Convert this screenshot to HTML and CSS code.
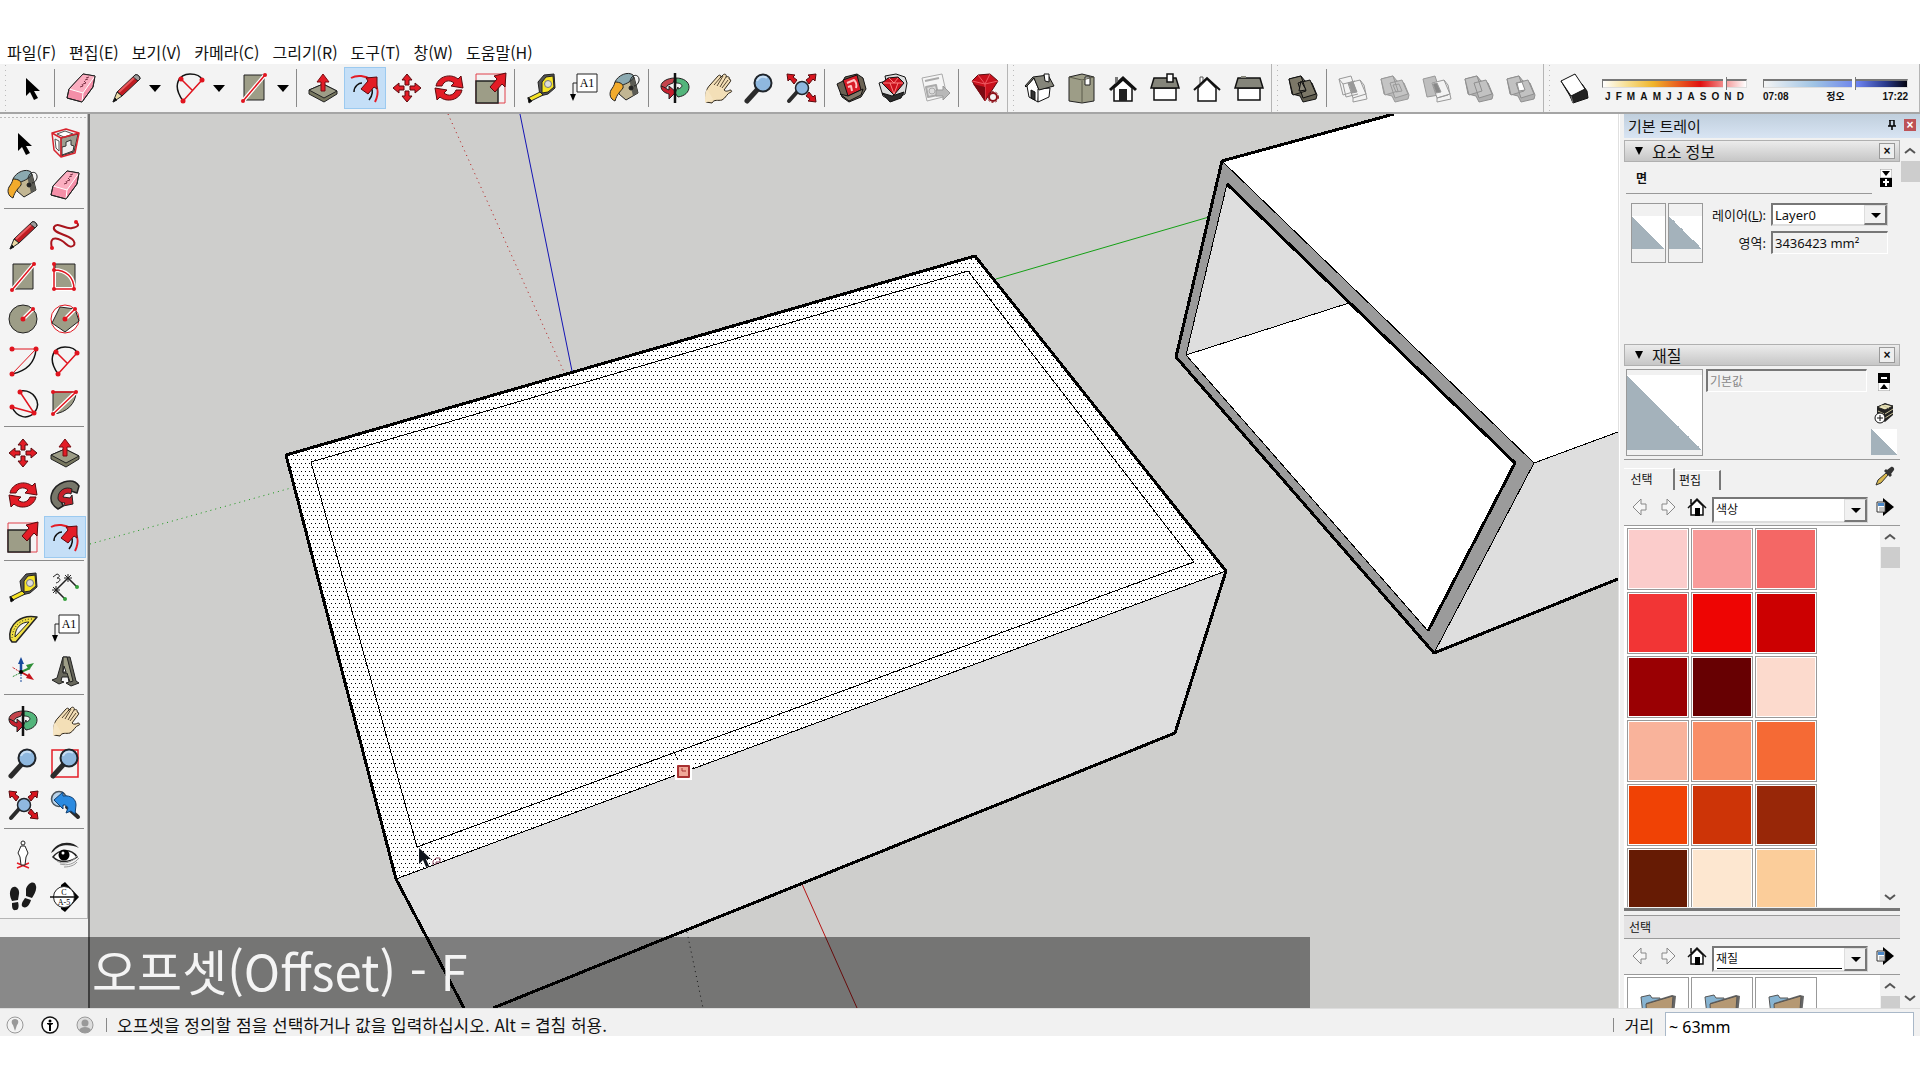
FILE: index.html
```html
<!DOCTYPE html>
<html lang="ko">
<head>
  <meta charset="UTF-8" />
  <meta name="viewport" content="width=device-width, initial-scale=1" />
  <title>SketchUp</title>
  <link rel="stylesheet" href="styles.css">
</head>
<body>

  <!-- icon set, every icon sits on a 32 x 32 box -->
  <svg class="sprite" aria-hidden="true">
    <symbol id="i-select" viewBox="0 0 32 32"><path d="M11 6v18l4-4 4 8 4-2-4-7h6z" fill="#000"/></symbol>
    <symbol id="i-eraser" viewBox="0 0 32 32" stroke="#222" stroke-linejoin="round">
      <path d="M18 2l12 2-2 11-11 15-15-4 2-9z" fill="#f48fa8"/>
      <path d="M18 2l12 2-12 17-14-4z" fill="#fbaec0" stroke="none"/>
      <path d="M4 17l14 4 12-17M18 21l-1 9" fill="none" stroke="#fff"/>
      <path d="M18 2l12 2-2 11-11 15-15-4 2-9z" fill="none"/>
      <path d="M15 15l3-1-1-2m1 0l3-1-2-2m1-1l3-1m-2-1l3-1" fill="none" stroke="#7d3346"/>
    </symbol>
    <symbol id="i-pencil" viewBox="0 0 32 32" stroke="#222" stroke-linejoin="round">
      <path d="M25 3c2-1 5 1 5 4L12 24l-5-4z" fill="#c01c22"/>
      <path d="M23 5l5 4 2-2c0-3-3-5-5-4z" fill="#9c9c9c"/>
      <path d="M7 20l5 4-9 6z" fill="#ead9a4"/>
      <path d="M5 26l2 2-4 2z" fill="#000"/>
      <path d="M9 20L24 6" stroke="#e8595d" stroke-width="2"/>
    </symbol>
    <symbol id="i-freehand" viewBox="0 0 32 32">
      <path d="M3 29C-1 14 12 20 17 25c6 6 12 0 6-5C17 15 3 14 5 8c3-6 12 3 18 1 6-1 8-3 4-6" fill="none" stroke="#a8141c" stroke-width="2"/>
      <g fill="#e0141e"><circle cx="3" cy="29" r="2"/><circle cx="27" cy="3" r="2"/></g>
    </symbol>
    <symbol id="i-rect" viewBox="0 0 32 32">
      <path d="M6 3h20v25H6z" fill="#9d9d87" stroke="#222"/>
      <path d="M5 29L27 3" stroke="#fff" stroke-width="4"/><path d="M5 29L27 3" stroke="#e0141e" stroke-width="1.5"/>
      <g fill="#e0141e"><circle cx="5" cy="29" r="2"/><circle cx="27" cy="3" r="2"/></g>
    </symbol>
    <symbol id="i-rotrect" viewBox="0 0 32 32">
      <path d="M6 3h20v25H6z" fill="#9d9d87" stroke="#222"/>
      <path d="M5 9c12 0 20 7 20 19H5z" fill="none" stroke="#fff" stroke-width="4"/>
      <path d="M5 3v25h20C25 16 17 9 5 9" fill="none" stroke="#e0141e" stroke-width="1.5"/>
      <g fill="#e0141e"><circle cx="5" cy="3" r="2"/><circle cx="5" cy="9" r="2"/><circle cx="5" cy="28" r="2"/><circle cx="25" cy="28" r="2"/></g>
    </symbol>
    <symbol id="i-circle" viewBox="0 0 32 32">
      <circle cx="16" cy="16" r="14" fill="#9d9d87" stroke="#222"/>
      <path d="M16 16L26 6" stroke="#fff" stroke-width="4"/><path d="M16 16L26 6" stroke="#e0141e" stroke-width="1.5"/>
      <g fill="#e0141e"><circle cx="16" cy="16" r="2.5"/><circle cx="26" cy="6" r="2"/></g>
    </symbol>
    <symbol id="i-polygon" viewBox="0 0 32 32">
      <circle cx="16" cy="16" r="14" fill="#fff" stroke="#e0141e"/>
      <path d="M11 4l15 2 4 12-14 11L3 20z" fill="#9d9d87" stroke="#222"/>
      <path d="M16 16L26 6" stroke="#fff" stroke-width="4"/><path d="M16 16L26 6" stroke="#e0141e" stroke-width="1.5"/>
      <g fill="#e0141e"><circle cx="16" cy="16" r="2.5"/><circle cx="26" cy="6" r="2"/></g>
    </symbol>
    <symbol id="i-arc" viewBox="0 0 32 32">
      <path d="M29 4C28 18 19 26 5 29" fill="none" stroke="#111" stroke-width="1.5"/>
      <path d="M5 4h24L5 29" fill="none" stroke="#e0141e"/>
      <g fill="#e0141e"><circle cx="5" cy="4" r="2.5"/><circle cx="29" cy="4" r="2.5"/><circle cx="5" cy="29" r="2.5"/></g>
    </symbol>
    <symbol id="i-arc2" viewBox="0 0 32 32">
      <path d="M9 29C-3 12 6 2 16 2c7 0 11 3 12 6" fill="none" stroke="#111" stroke-width="1.5"/>
      <path d="M9 29L28 8M7 7l12 12" fill="none" stroke="#e0141e" stroke-width="1.5"/>
      <g fill="#e0141e"><circle cx="9" cy="29" r="2.5"/><circle cx="28" cy="8" r="2.5"/><circle cx="7" cy="7" r="2.5"/></g>
    </symbol>
    <symbol id="i-arc3" viewBox="0 0 32 32">
      <path d="M13 4c13-2 22 11 15 21-7 8-18 6-23-5" fill="none" stroke="#111" stroke-width="1.5"/>
      <path d="M13 5l14 21L5 20" fill="none" stroke="#e0141e" stroke-width="1.5"/>
      <g fill="#e0141e"><circle cx="13" cy="5" r="2.5"/><circle cx="27" cy="26" r="2.5"/><circle cx="5" cy="20" r="2.5"/></g>
    </symbol>
    <symbol id="i-pie" viewBox="0 0 32 32">
      <path d="M4 5h23c0 11-9 21-23 22z" fill="#9d9d87" stroke="#222"/>
      <path d="M4 27L27 5" stroke="#fff" stroke-width="4"/><path d="M4 5h23L4 27" fill="none" stroke="#e0141e" stroke-width="1.5"/>
      <g fill="#e0141e"><circle cx="4" cy="5" r="2"/><circle cx="27" cy="5" r="2"/><circle cx="4" cy="27" r="2"/></g>
    </symbol>
    <symbol id="i-push" viewBox="0 0 32 32" stroke="#222" stroke-linejoin="round">
      <path d="M2 18l14-6 14 7v3l-13 8L2 22z" fill="#77775f"/><path d="M2 18l14-6 14 7-13 7z" fill="#9d9d87"/>
      <path d="M14 19v-9h-4l6-8 6 8h-4v9z" fill="#e31c26" stroke="#7a0c12"/>
    </symbol>
    <symbol id="i-offset" viewBox="0 0 32 32">
      <path d="M2 6C14-1 36 10 26 30" fill="none" stroke="#e31c26" stroke-width="2"/>
      <path d="M5 20c0-6 5-9 8-9m7 17c4-5 4-10 2-12" fill="none" stroke="#111" stroke-width="1.5"/>
      <path d="M28 5L17 6l2 3-7 8 7 5 6-7 3 2z" fill="#e31c26" stroke="#5a0a0e"/>
    </symbol>
    <symbol id="i-move" viewBox="0 0 32 32">
      <g fill="#e31c26" stroke="#5a0a0e" stroke-linejoin="round"><path d="M16 2l5 6h-3v5h-4V8h-3z"/><path d="M16 30l5-6h-3v-5h-4v5h-3z"/><path d="M2 16l6-5v3h5v4H8v3z"/><path d="M30 16l-6-5v3h-5v4h5v3z"/></g>
    </symbol>
    <symbol id="i-rotate" viewBox="0 0 32 32" fill="#e31c26" stroke="#5a0a0e" stroke-linejoin="round">
      <path d="M3 14C5 4 18 1 25 7l3-3 2 12-12-2 3-3c-5-4-10-2-12 3z"/><path d="M29 18C27 28 14 31 7 25l-3 3-2-12 12 2-3 3c5 4 10 2 12-3z"/>
    </symbol>
    <symbol id="i-scale" viewBox="0 0 32 32">
      <path d="M1 2h29v29H1z" fill="none" stroke="#e0404a"/><path d="M1 9h22v22H1z" fill="#9d9d87" stroke="#222" stroke-width="1.5"/>
      <path d="M31 1L19 4l3 3-7 8 5 5 7-8 3 3z" fill="#e31c26" stroke="#5a0a0e"/>
    </symbol>
    <symbol id="i-follow" viewBox="0 0 32 32" stroke="#222" stroke-linejoin="round">
      <path d="M9 30C-4 22 3 7 15 3c6-2 12-1 15 4l-2 7-6-2c-8-1-12 6-8 15z" fill="#77776a" stroke-width="1.5"/>
      <path d="M9 19c0-8 8-12 14-9l-1 5c-4-2-7 0-8 3l7 1 2-3 1 9-10 2 2-3c-4 0-7-2-7-5z" fill="#c5202a"/>
    </symbol>
    <symbol id="i-tape" viewBox="0 0 32 32" stroke="#222" stroke-linejoin="round">
      <path d="M13 10l6-7 10-1 1 14-7 6-8 2z" fill="#555"/><path d="M17 10l4-5 7-1 1 11-6 5-6 1z" fill="#f6e325"/><circle cx="23" cy="12" r="3.5" fill="#ddd" stroke="#777"/>
      <path d="M15 20l-12 6 1 4 14-7z" fill="#f6e325"/><path d="M3 25l4 4-3 2z" fill="#000"/>
    </symbol>
    <symbol id="i-dim" viewBox="0 0 32 32">
      <path d="M7 19L19 7l9 9M7 19l9 9" fill="none" stroke="#222" stroke-width="1.5"/>
      <path d="M3 19h8M7 15v8M4 16l6 6m0-6l-6 6M15 7h8m-4-4v8m-3-7l6 6m0-6l-6 6M4 6l4-3c4 1 2 4 0 4 5 0 3 4-1 5" fill="none" stroke="#222"/>
      <g fill="#35a03c"><circle cx="28" cy="16" r="2"/><circle cx="16" cy="28" r="2"/></g>
    </symbol>
    <symbol id="i-protractor" viewBox="0 0 32 32" fill="none" stroke-linejoin="round">
      <path d="M30 4C14 1 1 11 3 26l2 3h4z" fill="#f0df44" stroke="#222" stroke-width="1.5"/>
      <path d="M22 9C14 9 8 15 8 24z" fill="#f3f3f3" stroke="#222"/><path d="M25 6C13 6 6 13 5 25" stroke="#222" stroke-dasharray="1 2"/>
    </symbol>
    <symbol id="i-text" viewBox="0 0 32 32">
      <path d="M10 2h20v18H10z" fill="#fff" stroke="#222"/><path d="M10 11H6v16" fill="none" stroke="#222"/><path d="M3 22h6l-3 7z"/>
      <text x="20" y="15" class="icon-serif">A1</text>
    </symbol>
    <symbol id="i-axes" viewBox="0 0 32 32">
      <path d="M14 17v-9" stroke="#174a9c" stroke-width="2.5"/><path d="M11 9h6l-3-7z" fill="#174a9c"/><path d="M14 17l9-4" stroke="#2f8f38" stroke-width="2"/><path d="M19 10l8-2-5 7z" fill="#2f8f38"/><path d="M14 17l9 5" stroke="#c6141c" stroke-width="2"/><path d="M22 18l5 7-8-2z" fill="#c6141c"/>
      <path d="M14 19v8" stroke="#174a9c" stroke-dasharray="2 1"/><path d="M13 17l-8-5" stroke="#c6141c" stroke-dasharray="2 1"/><path d="M13 18l-8 4" stroke="#2f8f38" stroke-dasharray="2 1"/><circle cx="14" cy="17" r="2"/>
    </symbol>
    <symbol id="i-3dtext" viewBox="0 0 32 32" stroke="#222" stroke-linejoin="round">
      <path d="M3 25l5-2 6-21h7l6 24 3 2-8 3-5-3 3-1-1-5h-6l-1 4 3 1-5 2z" fill="#66665a"/><path d="M14 2h4l6 24-3 1-3-9h-4z" fill="#9d9d87"/><path d="M15 11l2 6h-3z" fill="#fff"/>
    </symbol>
    <symbol id="i-orbit" viewBox="0 0 32 32" stroke="#222" stroke-linejoin="round">
      <path d="M16 6C8 6 2 10 2 14l3 4 4-5 5-2z" fill="#c4444c"/><path d="M17 6c8 0 13 4 13 9s-4 9-11 10l-3-4 3-6v2c5-1 6-6-2-6z" fill="#53b57b"/>
      <path d="M2 14c0 5 4 7 8 8v5l7-7-7-6v4c-3-1-4-3-8-4z" fill="#c51f2d"/><path d="M16 1v30" stroke="#111" stroke-width="2.5"/>
    </symbol>
    <symbol id="i-pan" viewBox="0 0 32 32">
      <path d="M5 30c0-7-1-12 4-17l8-9c2-2 4 0 2 2l3-3c2-2 4 0 3 2 2-1 4 0 3 2 2 0 2 2 1 3l-6 8c2 2 4 1 6 0 2 0 2 2 1 2-4 1-5 6-9 8-4 1-8-1-10 3z" fill="#f3dfb7" stroke="#2c2418"/>
      <path d="M19 6l-6 7m9-9l-6 10m9-9l-6 10m8-7l-6 8" stroke="#554530" fill="none"/><path d="M4 31c0-8 0-10 2-14l6 10z" fill="#f6e5c3"/>
    </symbol>
    <symbol id="i-zoom" viewBox="0 0 32 32">
      <path d="M4 29l10-11" stroke="#2b2b2b" stroke-width="5" stroke-linecap="round"/><circle cx="20" cy="11" r="8.5" fill="#8fb8df" stroke="#20252b" stroke-width="2"/><path d="M14 9c2-5 7-5 10-3" stroke="#c7def4" fill="none" stroke-width="2"/>
    </symbol>
    <symbol id="i-zoomwin" viewBox="0 0 32 32"><path d="M3 3h26v27H3z" fill="none" stroke="#e31c26" stroke-width="1.5"/><use href="#i-zoom" width="32" height="32"/></symbol>
    <symbol id="i-extents" viewBox="0 0 32 32">
      <path d="M4 29l8-9" stroke="#2b2b2b" stroke-width="4" stroke-linecap="round"/><circle cx="17" cy="16" r="6.5" fill="#8fb8df" stroke="#20252b" stroke-width="1.5"/>
      <g fill="#d8151f" stroke="#5a0a0e"><path d="M2 2l8 1-2 2 4 3-3 4-4-5-2 2z"/><path d="M31 2l-8 1 2 2-4 3 3 4 4-5 2 2z"/><path d="M31 30l-8-1 2-2-4-3 3-4 4 5 2-2z"/></g>
    </symbol>
    <symbol id="i-prev" viewBox="0 0 32 32">
      <path d="M18 18l11 10" stroke="#2b2b2b" stroke-width="4" stroke-linecap="round"/><circle cx="10" cy="10" r="7.5" fill="#b9d3ea" stroke="#4a545c" stroke-width="1.5"/>
      <path d="M5 11l9-8v4c8-1 13 3 13 9l-1 9-4-3-5 2 2-5c-2-4-5-3-5-3v4z" fill="#2a8ae0" stroke="#113f70"/>
    </symbol>
    <symbol id="i-component" viewBox="0 0 32 32" stroke-linejoin="round">
      <path d="M3 6l14-4 13 4-4 20-14 4-7-7z" fill="#eee"/><path d="M12 11l17-4-4 18-13 4z" fill="#9d9d90" stroke="#333"/>
      <path d="M8 7l8-3 8 3-9 3zM6 12l4 2v10l-3-3z" fill="#fff" stroke="#555"/><path d="M13 20l4-1v-4l5-2v5l3 1-1 5-11 4z" fill="#eee" stroke="#333"/>
      <path d="M3 6l14-4 13 4-4 20-14 4-7-7zM3 6l9 5 18-5M12 11v19" fill="none" stroke="#d8232d" stroke-width="1.5"/>
    </symbol>
    <symbol id="i-paint" viewBox="0 0 32 32" stroke="#222" stroke-linejoin="round">
      <path d="M9 11L25 5l4 16-12 7-7-6z" fill="#c2b693"/><path d="M20 7l5-2 4 16-5 3z" fill="#5b5b54" stroke="none"/><path d="M6 10C9 3 19-1 24 3c3 4-7 10-15 11z" fill="#8ba9b0"/>
      <path d="M21 9c2-8 10-7 9 0-1 3-3 5-5 5" fill="none"/><path d="M6 10c5 0 9 2 8 6-3 4-6 6-8 13-5-2-6-7-4-11 2-3 3-4 4-8z" fill="#f2ab2c"/><circle cx="22" cy="16" r="2" fill="#222"/>
    </symbol>
    <symbol id="i-walkman" viewBox="0 0 32 32">
      <path d="M10 24l12 5M22 24l-12 5" stroke="#e31c26" stroke-width="1.5"/><circle cx="16" cy="4" r="2" fill="#fff" stroke="#222"/><path d="M14 7h4l3 7-2 4-1 8h-4l-1-8-2-4z" fill="#fff" stroke="#222"/>
    </symbol>
    <symbol id="i-eye" viewBox="0 0 32 32">
      <path d="M2 14C7 2 23 1 30 9 22 5 10 5 5 12z" fill="#222"/><path d="M4 18c6-8 18-9 24 0-8 6-18 6-24 0z" fill="#fff" stroke="#222" stroke-width="1.5"/><circle cx="15" cy="16" r="5.5"/><circle cx="14" cy="14" r="1.5" fill="#fff"/>
      <path d="M8 22c6 4 14 2 20-5m-17 8c8 2 14 0 19-6m-15 9c6 0 11-2 13-5" fill="none" stroke="#999"/>
    </symbol>
    <symbol id="i-feet" viewBox="0 0 32 32" fill="#1b1b1b">
      <path d="M4 8c3-5 9-1 8 5l-1 6-6 1c-2-4-3-8-1-12zM5 22l6-1c1 3 1 8-2 8-4 1-4-3-4-7zM19 8c2-7 9-9 10-3 1 4-2 9-4 12l-6-2zM18 17l6 2c-1 4-4 9-8 7-3-2 0-6 2-9z"/>
    </symbol>
    <symbol id="i-section" viewBox="0 0 32 32">
      <path d="M12 4l4-3 14 15-14 15-4-3z"/><circle cx="15" cy="16" r="10.5" fill="#fff" stroke="#222"/><path d="M1 16h28" stroke="#111" stroke-width="1.5"/>
      <text x="15" y="14" class="icon-tiny">C</text><text x="15" y="24" class="icon-tiny">A-5</text>
    </symbol>
    <symbol id="i-wh1" viewBox="0 0 32 32" stroke="#111" stroke-linejoin="round">
      <path d="M2 12l6-3 2-4 12-3 6 4 3 11-5 8-12 5-7-5z" fill="#6b6254"/><path d="M8 8l14-5 4 15-13 6z" fill="#d81c28"/><path d="M12 11l7-3c3 3 3 5 2 8m-8-1l3-1 1 5" fill="none" stroke="#ffc5c5" stroke-width="2"/><path d="M5 22l8 2 15-7-2 6-12 6z" fill="#807868"/>
    </symbol>
    <symbol id="i-wh2" viewBox="0 0 32 32" stroke="#111" stroke-linejoin="round">
      <path d="M2 11l7-2-1-5 11-2 9 3 2 6-2 11-13 7-9-5z" fill="#ddd"/><path d="M5 11l6-5 10-1 6 6-10 12z" fill="#c9101c"/><path d="M6 11h20M12 6l5 5 4-5M13 11l4 11 4-11" fill="none" stroke="#ff8080"/><path d="M5 21l10 3 12-4-3 6-11 4z" fill="#2c2c2c"/>
    </symbol>
    <symbol id="i-layout" viewBox="0 0 32 32" stroke="#aaa" stroke-linejoin="round">
      <path d="M3 6l20-4 5 22-20 5z" fill="#f5f5f5"/><path d="M6 9l14-3M7 15l10-2 2 10-10 2z" fill="#ddd" stroke-width="2"/><circle cx="13" cy="19" r="3" fill="none"/><path d="M17 18h7v-4l7 7-7 7v-4h-7z" fill="#b8b8b8" stroke="#999"/>
    </symbol>
    <symbol id="i-ruby" viewBox="0 0 32 32" stroke="#5a0a0e" stroke-linejoin="round">
      <path d="M3 9l6-6 12-1 8 7-13 20z" fill="#c9101c"/><path d="M3 9l13 3 13-3M9 3l7 9 5-10M16 12v17" fill="none" stroke="#f05a62"/><path d="M4 12l12 3v14z" fill="#7c0a12" stroke="none"/>
      <circle cx="24" cy="25" r="4" fill="#f3f3f3" stroke="#8c1018" stroke-width="2"/><circle cx="24" cy="25" r="5.5" fill="none" stroke="#8c1018" stroke-dasharray="2 2"/>
    </symbol>
    <symbol id="i-iso" viewBox="0 0 32 32" stroke="#111" stroke-linejoin="round">
      <path d="M4 14l7-8 5 12-1 12-9-5z" fill="#fff"/><path d="M15 17l12-1-1 9-11 5z" fill="#fff"/><path d="M10 5l15-2 6 11-15 4-5-12-8 9-1-1z" fill="#85857a"/><path d="M21 2h5v8l-4-1z" fill="#fff"/><path d="M8 18l4 2v8l-4-2z" fill="#333"/>
    </symbol>
    <symbol id="i-top" viewBox="0 0 32 32" stroke="#222" stroke-linejoin="round">
      <path d="M4 5l13-3 12 3v24l-12 2-13-2z" fill="#9d9d87"/><path d="M17 9v22" stroke="#5a5a4a"/><path d="M20 5h5v8h-5z" fill="#fff"/><path d="M4 5l13 3 12-3" fill="none" stroke="#5a5a4a"/>
    </symbol>
    <symbol id="i-front" viewBox="0 0 32 32"><path d="M7 16l9-8 9 8v13H7z" fill="#fff" stroke="#111" stroke-width="1.5"/><path d="M3 18L16 6l13 12" fill="none" stroke="#111" stroke-width="3"/><path d="M12 17h8v12h-8z" fill="#222"/><path d="M8 5h3v4l-3 3z" fill="#777"/></symbol>
    <symbol id="i-right" viewBox="0 0 32 32"><path d="M5 16h22v12H5z" fill="#fff" stroke="#111" stroke-width="1.5"/><path d="M5 6h22l3 10H2z" fill="#85857a" stroke="#111" stroke-width="1.5"/><path d="M18 2h6v8h-6z" fill="#fff" stroke="#111" stroke-width="1.5"/></symbol>
    <symbol id="i-back" viewBox="0 0 32 32"><path d="M7 16l9-9 9 9v13H7z" fill="#fff" stroke="#111" stroke-width="1.5"/><path d="M9 5h3v6l-3 3z" fill="#fff" stroke="#555"/><path d="M3 18L16 6l13 12" fill="none" stroke="#111" stroke-width="2"/></symbol>
    <symbol id="i-left" viewBox="0 0 32 32"><path d="M5 16h22v12H5z" fill="#fff" stroke="#111" stroke-width="1.5"/><path d="M5 6h22l3 10H2z" fill="#85857a" stroke="#111" stroke-width="1.5"/><path d="M8 4h5v2H8z" fill="#85857a"/></symbol>
    <symbol id="i-shell" viewBox="0 0 32 32" stroke="#111" stroke-linejoin="round"><path d="M2 7l12-3 4 5 7 2 5 12-1 4-13 3-3-6-8-2z" fill="#625f51"/><path d="M2 7l12-3 5 15-13 4zM11 11l12-3 6 14-13 4z" fill="#7c7868"/><path d="M14 9l5 9-7 1z" fill="#8d897a"/></symbol>
    <symbol id="i-intersect" viewBox="0 0 32 32" stroke="#999" stroke-linejoin="round" fill="none"><path d="M2 7l12-3 5 15-13 4zM11 11l12-3 6 14-13 4z"/><path d="M2 7l4 5 12-3M6 12l3 13 12-3M23 8l4 5 3 14-14 3v-4"/><path d="M12 11l4-1 4 10-5 1z" fill="#999"/></symbol>
    <symbol id="i-union" viewBox="0 0 32 32" stroke="#999" stroke-linejoin="round"><path d="M2 7l12-3 4 5 7 2 5 12-1 4-13 3-3-6-8-2z" fill="#b8b8b8"/><path d="M2 7l12-3 5 15-13 4zM11 11l12-3 6 14-13 4zM14 13l6-1 3 7-6 1z" fill="#c4c4c4"/></symbol>
    <symbol id="i-subtract" viewBox="0 0 32 32" stroke="#999" stroke-linejoin="round"><path d="M2 7l12-3 5 15-1 4-12 2z" fill="#bebebe"/><path d="M11 11l12-3 6 14-13 4z" fill="#f3f3f3"/><path d="M12 12l4-1 4 9-5 1z" fill="#888"/><path d="M23 8l4 5 3 14-14 3v-4m0 0l11-3" fill="none"/></symbol>
    <symbol id="i-trim" viewBox="0 0 32 32" stroke="#8f8f8f" stroke-linejoin="round"><path d="M2 7l12-3 4 5 7 2 5 12-1 4-13 3-3-6-8-2z" fill="#b0b0b0"/><path d="M2 7l12-3 5 15-13 4zM11 11l12-3 6 14-13 4z" fill="#c2c2c2"/></symbol>
    <symbol id="i-split" viewBox="0 0 32 32" stroke="#8f8f8f" stroke-linejoin="round"><path d="M2 7l12-3 4 5 7 2 5 12-1 4-13 3-3-6-8-2z" fill="#b0b0b0"/><path d="M2 7l12-3 5 15-13 4zM11 11l12-3 6 14-13 4z" fill="#c2c2c2"/><path d="M12 11l5-1 3 8-6 1z" fill="#fff"/></symbol>
    <symbol id="i-shadow" viewBox="0 0 32 32" stroke="#111" stroke-linejoin="round"><path d="M2 9l9 15 3 7 15-5-1-7-5-7z" fill="#222"/><path d="M2 9l14-7 10 15-14 7z" fill="#fff"/><path d="M12 24l2 7" stroke="#777"/></symbol>
    <symbol id="i-prevnav" viewBox="0 0 16 18"><path d="M1 9l8-8v5h5v6H9v5z" fill="#f6f6f6" stroke="#888"/></symbol>
    <symbol id="i-nextnav" viewBox="0 0 16 18"><path d="M15 9L7 1v5H2v6h5v5z" fill="#f6f6f6" stroke="#888"/></symbol>
    <symbol id="i-home" viewBox="0 0 20 20"><path d="M4 9l6-6 6 6v9H4z" fill="#fff" stroke="#111" stroke-width="1.5"/><path d="M1 11l9-9 9 9M4 7V2" fill="none" stroke="#111" stroke-width="1.5"/><path d="M8 11h5v8H8z"/></symbol>
    <symbol id="i-details" viewBox="0 0 18 18"><path d="M7 3V0l11 9-11 9v-3z"/><path d="M1 4h8v10H1z" fill="#fff" stroke="#333"/><path d="M2 5h6v3H2z" fill="#4b87c7"/><path d="M3 10h5m-5 2h5" stroke="#888"/></symbol>
    <symbol id="i-chev" viewBox="0 0 12 8"><path d="M1 6l5-4 5 4" fill="none" stroke="#555" stroke-width="2"/></symbol>
    <symbol id="i-folder" viewBox="0 0 36 32"><path d="M1 5l9-2 2 3h8v26H4z" fill="#87b4d2" stroke="#555"/><path d="M6 11l26-8 4 1-3 28H6z" fill="#666"/><path d="M6 12l27-8-2 28H7z" fill="#b59873" stroke="#555"/></symbol>
  </svg>

  <nav class="menubar">
    <button>파일(F)</button>
    <button>편집(E)</button>
    <button>보기(V)</button>
    <button>카메라(C)</button>
    <button>그리기(R)</button>
    <button>도구(T)</button>
    <button>창(W)</button>
    <button>도움말(H)</button>
  </nav>

  <header class="toolbars">
    <div class="toolbar">
      <button class="tool" aria-label="선택"><svg><use href="#i-select"/></svg></button>
      <span class="sep"></span>
      <button class="tool" aria-label="지우개"><svg><use href="#i-eraser"/></svg></button>
      <div class="split"><button class="tool" aria-label="선"><svg><use href="#i-pencil"/></svg></button><button class="caret" aria-label="선 도구"></button></div>
      <div class="split"><button class="tool" aria-label="호"><svg><use href="#i-arc2"/></svg></button><button class="caret" aria-label="호 도구"></button></div>
      <div class="split"><button class="tool" aria-label="직사각형"><svg><use href="#i-rect"/></svg></button><button class="caret" aria-label="도형 도구"></button></div>
      <span class="sep"></span>
      <button class="tool" aria-label="밀기/끌기"><svg><use href="#i-push"/></svg></button>
      <button class="tool active" aria-label="오프셋"><svg><use href="#i-offset"/></svg></button>
      <button class="tool" aria-label="이동"><svg><use href="#i-move"/></svg></button>
      <button class="tool" aria-label="회전"><svg><use href="#i-rotate"/></svg></button>
      <button class="tool" aria-label="배율"><svg><use href="#i-scale"/></svg></button>
      <span class="sep"></span>
      <button class="tool" aria-label="줄자"><svg><use href="#i-tape"/></svg></button>
      <button class="tool" aria-label="텍스트"><svg><use href="#i-text"/></svg></button>
      <button class="tool" aria-label="페인트통"><svg><use href="#i-paint"/></svg></button>
      <span class="sep"></span>
      <button class="tool" aria-label="궤도"><svg><use href="#i-orbit"/></svg></button>
      <button class="tool" aria-label="팬"><svg><use href="#i-pan"/></svg></button>
      <button class="tool" aria-label="확대/축소"><svg><use href="#i-zoom"/></svg></button>
      <button class="tool" aria-label="범위 확대"><svg><use href="#i-extents"/></svg></button>
      <span class="sep"></span>
      <button class="tool" aria-label="3D Warehouse"><svg><use href="#i-wh1"/></svg></button>
      <button class="tool" aria-label="Extension Warehouse"><svg><use href="#i-wh2"/></svg></button>
      <button class="tool" aria-label="LayOut"><svg><use href="#i-layout"/></svg></button>
      <span class="sep"></span>
      <button class="tool" aria-label="확장 프로그램 관리자"><svg><use href="#i-ruby"/></svg></button>
    </div>
    <div class="toolbar">
      <button class="tool" aria-label="등각"><svg><use href="#i-iso"/></svg></button>
      <button class="tool" aria-label="위"><svg><use href="#i-top"/></svg></button>
      <button class="tool" aria-label="앞"><svg><use href="#i-front"/></svg></button>
      <button class="tool" aria-label="오른쪽"><svg><use href="#i-right"/></svg></button>
      <button class="tool" aria-label="뒤"><svg><use href="#i-back"/></svg></button>
      <button class="tool" aria-label="왼쪽"><svg><use href="#i-left"/></svg></button>
    </div>
    <div class="toolbar">
      <button class="tool" aria-label="외부 셸"><svg><use href="#i-shell"/></svg></button>
      <span class="sep"></span>
      <button class="tool" aria-label="교차"><svg><use href="#i-intersect"/></svg></button>
      <button class="tool" aria-label="결합"><svg><use href="#i-union"/></svg></button>
      <button class="tool" aria-label="빼기"><svg><use href="#i-subtract"/></svg></button>
      <button class="tool" aria-label="트림"><svg><use href="#i-trim"/></svg></button>
      <button class="tool" aria-label="분할"><svg><use href="#i-split"/></svg></button>
    </div>
    <div class="toolbar shadows">
      <button class="tool" aria-label="그림자"><svg><use href="#i-shadow"/></svg></button>
      <div class="slider">
        <input type="range" class="months" aria-label="날짜" min="0" max="100" value="86">
        <div class="ticks"><span>J</span><span>F</span><span>M</span><span>A</span><span>M</span><span>J</span><span>J</span><span>A</span><span>S</span><span>O</span><span>N</span><span>D</span></div>
      </div>
      <div class="slider">
        <input type="range" class="hours" aria-label="시간" min="0" max="100" value="63">
        <div class="ticks"><span>07:08</span><span>정오</span><span>17:22</span></div>
      </div>
    </div>
  </header>

  <main>
    <aside class="palette">
      <div class="palette-tools">
        <div class="pair">
          <button class="tool" aria-label="선택"><svg><use href="#i-select"/></svg></button>
          <button class="tool" aria-label="구성요소"><svg><use href="#i-component"/></svg></button>
          <button class="tool" aria-label="페인트통"><svg><use href="#i-paint"/></svg></button>
          <button class="tool" aria-label="지우개"><svg><use href="#i-eraser"/></svg></button>
        </div>
        <div class="pair">
          <button class="tool" aria-label="선"><svg><use href="#i-pencil"/></svg></button>
          <button class="tool" aria-label="프리핸드"><svg><use href="#i-freehand"/></svg></button>
          <button class="tool" aria-label="직사각형"><svg><use href="#i-rect"/></svg></button>
          <button class="tool" aria-label="회전된 직사각형"><svg><use href="#i-rotrect"/></svg></button>
          <button class="tool" aria-label="원"><svg><use href="#i-circle"/></svg></button>
          <button class="tool" aria-label="다각형"><svg><use href="#i-polygon"/></svg></button>
          <button class="tool" aria-label="호"><svg><use href="#i-arc"/></svg></button>
          <button class="tool" aria-label="2점 호"><svg><use href="#i-arc2"/></svg></button>
          <button class="tool" aria-label="3점 호"><svg><use href="#i-arc3"/></svg></button>
          <button class="tool" aria-label="파이"><svg><use href="#i-pie"/></svg></button>
        </div>
        <div class="pair">
          <button class="tool" aria-label="이동"><svg><use href="#i-move"/></svg></button>
          <button class="tool" aria-label="밀기/끌기"><svg><use href="#i-push"/></svg></button>
          <button class="tool" aria-label="회전"><svg><use href="#i-rotate"/></svg></button>
          <button class="tool" aria-label="따라가기"><svg><use href="#i-follow"/></svg></button>
          <button class="tool" aria-label="배율"><svg><use href="#i-scale"/></svg></button>
          <button class="tool active" aria-label="오프셋"><svg><use href="#i-offset"/></svg></button>
        </div>
        <div class="pair">
          <button class="tool" aria-label="줄자"><svg><use href="#i-tape"/></svg></button>
          <button class="tool" aria-label="치수"><svg><use href="#i-dim"/></svg></button>
          <button class="tool" aria-label="각도기"><svg><use href="#i-protractor"/></svg></button>
          <button class="tool" aria-label="텍스트"><svg><use href="#i-text"/></svg></button>
          <button class="tool" aria-label="축"><svg><use href="#i-axes"/></svg></button>
          <button class="tool" aria-label="3D 텍스트"><svg><use href="#i-3dtext"/></svg></button>
        </div>
        <div class="pair">
          <button class="tool" aria-label="궤도"><svg><use href="#i-orbit"/></svg></button>
          <button class="tool" aria-label="팬"><svg><use href="#i-pan"/></svg></button>
          <button class="tool" aria-label="확대/축소"><svg><use href="#i-zoom"/></svg></button>
          <button class="tool" aria-label="창 확대"><svg><use href="#i-zoomwin"/></svg></button>
          <button class="tool" aria-label="범위 확대"><svg><use href="#i-extents"/></svg></button>
          <button class="tool" aria-label="이전"><svg><use href="#i-prev"/></svg></button>
        </div>
        <div class="pair">
          <button class="tool" aria-label="카메라 배치"><svg><use href="#i-walkman"/></svg></button>
          <button class="tool" aria-label="둘러보기"><svg><use href="#i-eye"/></svg></button>
          <button class="tool" aria-label="이동 시점"><svg><use href="#i-feet"/></svg></button>
          <button class="tool" aria-label="단면 평면"><svg><use href="#i-section"/></svg></button>
        </div>
      </div>
    </aside>

    <section class="viewport">
      <svg class="scene">
        <defs>
          <pattern id="dots" width="4" height="8" patternUnits="userSpaceOnUse">
            <rect width="4" height="8" fill="#fff"/>
            <rect x="3" y="3" width="1" height="1"/>
            <rect x="1" y="7" width="1" height="1"/>
          </pattern>
        </defs>
        <g transform="translate(-90 -114)" fill="none" stroke-linejoin="round">
          <!-- axes -->
          <path d="M520 114L572 371" stroke="#1414b4"/>
          <path d="M448 114L564 372" stroke="#b41414" stroke-dasharray="1 4"/>
          <path d="M90 544L291 488" stroke="#149614" stroke-dasharray="1 4"/>
          <path d="M996 279L1209 217" stroke="#14a014"/>
          <path d="M802 884L857 1008" stroke="#b41414"/>
          <path d="M687 932L703 1008" stroke="#222" stroke-dasharray="1 4"/>

          <!-- box with the selected top face -->
          <path d="M396 879L1226 571 1175 733 493 1008H464z" fill="#dedede"/>
          <path d="M286 455L975 256 1226 571 396 879z" fill="url(#dots)"/>
          <g stroke="#000" shape-rendering="crispEdges">
            <path d="M396 879L1226 571M311 462L968 271 1194 562 417 847z"/>
            <path d="M683 771L674 752" stroke-dasharray="3 3"/>
            <path d="M464 1008L396 879 286 455 975 256 1226 571 1175 733 493 1008" stroke-width="3"/>
          </g>
          <path d="M675 763h17v17h-17z" fill="#fff"/>
          <path d="M678 766h11v11h-11z" fill="#f0a898" stroke="#a83232" stroke-width="2"/>
          <path d="M682 768v3h4" stroke="#a83232"/>

          <!-- hollow box -->
          <path d="M1222 161L1394 114H1618V432L1534 463z" fill="#fff"/>
          <path d="M1534 463L1618 432V579L1434 653z" fill="#dedede"/>
          <path d="M1222 161L1534 463 1434 653 1176 357z" fill="#9b9b9b"/>
          <path d="M1227 184L1515 463 1428 631 1186 355z" fill="#fff"/>
          <path d="M1227 184L1349 303 1186 355z" fill="#dedede"/>
          <g stroke="#000" shape-rendering="crispEdges">
            <path d="M1222 161L1534 463 1434 653M1534 463L1618 432M1227 184L1186 355 1349 303M1186 355L1428 631"/>
            <path d="M1394 114L1222 161 1176 357 1434 653 1618 579M1227 184L1515 463 1428 631" stroke-width="3"/>
          </g>

          <!-- cursor -->
          <path d="M419 848v16l4-4 3 7 3-1-3-7h5z" fill="#10141c"/>
          <path d="M433 865v-4l3-3h4v4h-4v3" stroke="#8c4660"/>
        </g>
      </svg>
    </section>

    <aside class="tray">
      <div class="tray-title">
        <span>기본 트레이</span>
        <button class="pin" aria-label="고정"><svg viewBox="0 0 8 10"><path d="M2 0v6M6 0v6M1 0h5M0 6h8M4 6v4" fill="none" stroke="#000" stroke-width="1.5"/></svg></button>
        <button class="close-red" aria-label="닫기">×</button>
      </div>
      <div class="tray-row">
        <div class="panels">
          <h2 class="panel-head"><i></i>요소 정보<button class="close" aria-label="닫기">×</button></h2>
          <div class="entity">
            <div class="entity-head"><b>면</b><button class="toggle" aria-label="세부 정보"><svg viewBox="0 0 12 18"><path d="M0 0h12v9H0z" fill="#fff" stroke="#999"/><path d="M0 9h12v9H0z"/><path d="M2 2h8L6 7z"/><path d="M6 10v7M3 13h6" stroke="#fff" stroke-width="2"/></svg></button></div>
            <div class="entity-body">
              <button class="face" aria-label="앞면"></button>
              <button class="face" aria-label="뒷면"></button>
              <div class="fields">
                <label for="layer">레이어(<u>L</u>):</label>
                <span class="combo"><select id="layer"><option>Layer0</option></select></span>
                <label for="area">영역:</label>
                <input id="area" type="text" value="3436423 mm²" readonly>
              </div>
            </div>
          </div>

          <h2 class="panel-head"><i></i>재질<button class="close" aria-label="닫기">×</button></h2>
          <div class="material">
            <div class="material-preview"></div>
            <input type="text" class="material-name" aria-label="재질 이름" value="기본값" disabled>
            <div class="material-tools">
              <button class="toggle" aria-label="보조 창"><svg viewBox="0 0 12 18"><path d="M0 9h12v9H0z" fill="#fff" stroke="#999"/><path d="M0 0h12v10H0z"/><path d="M2 16h8l-4-5z"/><path d="M3 5h6" stroke="#fff" stroke-width="2"/></svg></button>
              <button class="create" aria-label="재질 만들기"><svg viewBox="0 0 20 22"><path d="M3 5l8-4 8 3v9l-8 7-8-5z" fill="#222"/><path d="M3 5l8-3 8 2-8 4z" fill="#e8e2b8" stroke="#222"/><path d="M7 3l8 3M11 12l8-5M11 16l8-5M4 9l6 3" stroke="#c9c39a"/><circle cx="6" cy="16" r="5" fill="#fff" stroke="#111"/><path d="M6 13v6M3 16h6" stroke="#111"/></svg></button>
              <button class="default" aria-label="기본 재질"></button>
            </div>
          </div>

          <div class="tabs">
            <button class="tab on">선택</button><button class="tab">편집</button>
            <button class="dropper" aria-label="샘플 페인트"><svg viewBox="0 0 20 20"><path d="M1 19l2-5 8-7 2 2-7 8z" fill="#d9b84e" stroke="#333"/><path d="M9 5l6 6 2-2-1-1 3-4c1-2-2-4-3-3l-4 3-1-1z" fill="#333"/></svg></button>
          </div>
          <div class="browse">
            <button aria-label="뒤로"><svg class="nav-arrow"><use href="#i-prevnav"/></svg></button>
            <button aria-label="앞으로"><svg class="nav-arrow"><use href="#i-nextnav"/></svg></button>
            <button aria-label="모델 내"><svg class="nav-home"><use href="#i-home"/></svg></button>
            <span class="combo"><select aria-label="라이브러리"><option>색상</option></select></span>
            <button aria-label="세부 정보"><svg class="nav-more"><use href="#i-details"/></svg></button>
          </div>
          <div class="listing colors">
            <div class="grid" id="swatches"></div>
            <div class="scroll"><svg><use href="#i-chev"/></svg><i></i><svg class="down"><use href="#i-chev"/></svg></div>
          </div>

          <div class="second-head">선택</div>
          <div class="browse">
            <button aria-label="뒤로"><svg class="nav-arrow"><use href="#i-prevnav"/></svg></button>
            <button aria-label="앞으로"><svg class="nav-arrow"><use href="#i-nextnav"/></svg></button>
            <button aria-label="모델 내"><svg class="nav-home"><use href="#i-home"/></svg></button>
            <span class="combo lined"><select aria-label="라이브러리"><option>재질</option></select></span>
            <button aria-label="세부 정보"><svg class="nav-more"><use href="#i-details"/></svg></button>
          </div>
          <div class="listing folders">
            <div class="grid">
              <button class="swatch" aria-label="폴더"><svg><use href="#i-folder"/></svg></button>
              <button class="swatch" aria-label="폴더"><svg><use href="#i-folder"/></svg></button>
              <button class="swatch" aria-label="폴더"><svg><use href="#i-folder"/></svg></button>
            </div>
            <div class="scroll"><svg><use href="#i-chev"/></svg><i></i></div>
          </div>
        </div>
        <div class="scroll outer"><svg><use href="#i-chev"/></svg><i></i><svg class="down"><use href="#i-chev"/></svg></div>
      </div>
    </aside>

    <div class="caption">오프셋(Offset) - F</div>
  </main>

  <footer class="status">
    <svg viewBox="0 0 18 18"><circle cx="9" cy="9" r="8" fill="#f3f3f3" stroke="#999"/><path d="M9 3c4 0 4 4 2 6l-2 6-2-6C5 7 5 3 9 3z" fill="#999"/></svg>
    <svg viewBox="0 0 18 18"><circle cx="9" cy="9" r="8" fill="#fff" stroke="#111" stroke-width="1.5"/><circle cx="9" cy="5" r="1.5"/><path d="M6 7h6v1l-2 1v6H8V9L6 8z"/></svg>
    <svg viewBox="0 0 18 18"><circle cx="9" cy="9" r="8" fill="#ddd" stroke="#999"/><circle cx="9" cy="7" r="3.5" fill="#999"/><path d="M3 14c2-4 10-4 12 0-3 4-9 4-12 0z" fill="#999"/></svg>
    <p>오프셋을 정의할 점을 선택하거나 값을 입력하십시오. Alt = 겹침 허용.</p>
    <label for="measure">거리</label>
    <input id="measure" type="text" value="~ 63mm">
  </footer>

  <script>
    const colors = [
      "#fbcccb", "#f99b9a", "#f46765",
      "#f23535", "#ee0503", "#cc0001",
      "#9a0003", "#670002", "#fcdacd",
      "#f9b39b", "#f98f68", "#f56a35",
      "#f04205", "#cd3407", "#982708",
      "#661b04", "#fde7d0", "#fbcd9a"
    ];

    const swatches = document.getElementById("swatches");

    colors.forEach((color) => {
      const btn = document.createElement("button");
      btn.className = "swatch";
      btn.setAttribute("aria-label", color);
      btn.style.backgroundColor = color;
      swatches.appendChild(btn);
    });
  </script>

</body>
</html>
```

FILE: styles.css
```css
* {
  box-sizing: border-box;
}
body {
  margin: 0;
  height: 100vh;
  padding: 40px 0 44px;
  display: flex;
  flex-direction: column;
  overflow: hidden;
  background: #fff;
  color: #111;
  font-family: "Noto Sans", "Noto Sans CJK KR", sans-serif;
  font-size: 13px;
}
button {
  border: none;
  background: none;
  padding: 0;
  color: inherit;
  font: inherit;
}
svg {
  display: block;
}
.sprite {
  display: none;
}
.icon-serif {
  font: 12px "Liberation Serif", serif;
  text-anchor: middle;
}
.icon-tiny {
  font: 8px "Liberation Serif", serif;
  text-anchor: middle;
}

/* menu */
.menubar {
  display: flex;
  gap: 13px;
  height: 24px;
  padding-left: 7px;
  font-family: "Noto Sans CJK KR", sans-serif;
  font-size: 16px;
  line-height: 24px;
}

/* toolbars */
.toolbars {
  display: flex;
  height: 50px;
  background: #f3f3f3;
  border-bottom: 2px solid #a5a5a5;
}
.toolbar {
  display: flex;
  align-items: center;
  padding: 0 1px 0 10px;
  border-right: 1px solid #b5b5b5;
  background: radial-gradient(circle, #bbb 1px, transparent 1px) 4px 4px / 3px 5px repeat-y;
}
.tool {
  display: flex;
  align-items: center;
  justify-content: center;
  width: 42px;
  height: 42px;
}
.tool svg {
  width: 32px;
  height: 32px;
}
.tool.active {
  background: #c5dff7;
  border: 1px solid #9ccaf0;
}
.sep {
  width: 1px;
  height: 38px;
  margin: 0 5px 0 2px;
  background: #8a8a8a;
}
.split {
  display: flex;
  align-items: center;
  width: 64px;
  padding-left: 3px;
}
.caret {
  border: 6px solid transparent;
  border-top: 7px solid #000;
  border-bottom: none;
}
.split .caret {
  margin-left: 2px;
}
.shadows {
  flex: 1;
}
.slider {
  flex: 1;
  max-width: 145px;
  margin-left: 6px;
  padding-top: 4px;
}
.slider + .slider {
  margin-left: 16px;
}
.slider input {
  display: block;
  width: 100%;
  height: 14px;
  margin: 0;
  background: none;
  appearance: none;
}
.slider input::-webkit-slider-runnable-track {
  height: 9px;
  border: 1px solid #ddd;
  border-top: 2px solid #777;
  border-left-color: #777;
}
.months::-webkit-slider-runnable-track {
  background: linear-gradient(to right, #fff, #f6dc8a 18%, #efb52c 35%, #e85b20 53%, #e01010 68%, #f28c8c 84%, #fff);
}
.hours::-webkit-slider-runnable-track {
  background: linear-gradient(to right, #f4f4f4, #9fc3e4 35%, #6a80ec 66%, #2a3a8c 85%, #050510);
}
.slider input::-webkit-slider-thumb {
  appearance: none;
  width: 4px;
  height: 13px;
  margin-top: -4px;
  background: #f8f8f8;
  border-right: 1px solid #777;
}
.ticks {
  display: flex;
  justify-content: space-between;
  padding: 0 3px;
  font: bold 10px/14px "Liberation Sans", "Noto Sans CJK KR", sans-serif;
}
.hours + .ticks {
  padding: 0;
}

/* work area */
main {
  position: relative;
  flex: 1;
  min-height: 0;
  display: flex;
  background: #f1f1f1;
}
.palette {
  width: 88px;
}
.palette-tools {
  padding: 8px 2px 0 2px;
  background: radial-gradient(circle, #bbb 1px, transparent 1px) 3px 2px / 4px 3px repeat-x #f4f4f4;
  border-right: 1px solid #b5b5b5;
  border-bottom: 1px solid #b5b5b5;
}
.pair {
  display: grid;
  grid-template-columns: 42px 42px;
}
.pair + .pair {
  padding-top: 7px;
  background: linear-gradient(#8a8a8a, #8a8a8a) 2px 1px / 80px 1px no-repeat;
  border-top: 1px solid transparent;
}
.viewport {
  flex: 1;
  min-width: 0;
  border-left: 2px solid #6e6e6e;
  background: #cececc;
  overflow: hidden;
}
.scene {
  width: 100%;
  height: 100%;
}
.caption {
  position: absolute;
  left: 0;
  bottom: 0;
  width: 1310px;
  height: 71px;
  padding-left: 92px;
  background: rgba(0, 0, 0, 0.43);
  color: #f4f4f4;
  font: 49px/66px "Noto Sans CJK KR", sans-serif;
}

/* tray */
.tray {
  display: flex;
  flex-direction: column;
  width: 302px;
  padding-left: 5px;
  border-left: 1px solid #e0e0e0;
  background: linear-gradient(to right, #fff 1px, #f1f1f1 1px);
}
.tray-title {
  display: flex;
  align-items: center;
  height: 24px;
  padding: 0 4px 2px;
  background: linear-gradient(#c0cfdd, #d8e4f3);
  font-size: 15px;
}
.tray-title span {
  flex: 1;
}
.pin svg {
  width: 8px;
  height: 10px;
  margin-right: 8px;
}
.close-red {
  width: 12px;
  height: 12px;
  background: #bd5257;
  color: #fff;
  font: bold 12px/12px "Liberation Sans", sans-serif;
}
.tray-row {
  display: flex;
  flex: 1;
  min-height: 0;
}
.panels {
  flex: 1;
  min-width: 0;
  display: flex;
  flex-direction: column;
  padding-top: 2px;
  overflow: hidden;
}
.panel-head {
  display: flex;
  align-items: center;
  flex: none;
  height: 22px;
  margin: 0;
  padding: 0 4px 0 10px;
  border: 1px solid #b0b0b0;
  background: linear-gradient(#ececec, #c6c6c6);
  font-size: 16px;
  font-weight: normal;
}
.panel-head i {
  margin-right: 9px;
  border: 4px solid transparent;
  border-top: 8px solid #000;
  border-bottom: none;
}
.close {
  width: 16px;
  height: 16px;
  margin-left: auto;
  border: 1px solid #999;
  background: #eee;
  font: bold 12px/12px "Liberation Sans", sans-serif;
}
.entity {
  flex: none;
  height: 182px;
}
.entity-head {
  display: flex;
  align-items: center;
  justify-content: space-between;
  height: 32px;
  margin: 0 28px 0 2px;
  padding-left: 10px;
  border-bottom: 1px solid #999;
  font-size: 12px;
}
.toggle svg {
  width: 12px;
  height: 18px;
}
.entity-head .toggle {
  margin-right: -20px;
}
.entity-body {
  display: flex;
  align-items: flex-start;
  gap: 2px;
  padding: 9px 12px 0 7px;
}
.face {
  width: 35px;
  height: 60px;
  border: 1px solid #999;
  background: linear-gradient(45deg, #a4b2bb 50%, #fff 50%) 0 12px / 33px 33px no-repeat;
}
.fields {
  flex: 1;
  display: grid;
  grid-template-columns: 61px 1fr;
  gap: 5px;
  align-items: center;
}
.fields label {
  text-align: right;
  white-space: nowrap;
}
.fields input,
.fields select,
.material-name {
  width: 100%;
  min-width: 0;
  height: 23px;
  padding: 0 2px;
  border: 1px solid #fff;
  border-top: 2px solid #777;
  border-left: 2px solid #777;
  border-radius: 0;
  background: #f1f1f1;
  color: #111;
  font: inherit;
}
.combo {
  position: relative;
  display: block;
}
.combo select {
  appearance: none;
  width: 100%;
  height: 23px;
  padding: 0 2px;
  border: 2px solid #777;
  border-right-color: #ccc;
  border-bottom-color: #ddd;
  border-radius: 0;
  background: #fff;
  color: #111;
  font: inherit;
}
.combo::before {
  content: "";
  position: absolute;
  top: 2px;
  right: 1px;
  bottom: 1px;
  width: 20px;
  border: 1px solid #ddd;
  border-right: 2px solid #777;
  border-bottom: 2px solid #777;
  background: #f1f1f1;
  pointer-events: none;
}
.combo::after {
  content: "";
  position: absolute;
  top: 50%;
  right: 7px;
  margin-top: -2px;
  border: 5px solid transparent;
  border-top-color: #000;
  border-bottom: none;
  pointer-events: none;
}
.material {
  display: flex;
  align-items: flex-start;
  gap: 3px;
  flex: none;
  height: 94px;
  padding: 3px 2px;
  border-bottom: 1px solid #999;
}
.material-preview {
  flex: none;
  width: 77px;
  height: 87px;
  border: 1px solid #999;
  background: linear-gradient(45deg, #a4b2bb 50%, #fff 50%) 0 5px / 75px 75px no-repeat;
}
.material-name {
  flex: 1;
  color: #888;
  font-size: 12px;
}
.material-tools {
  display: flex;
  flex-direction: column;
  align-items: center;
  width: 28px;
  padding-top: 4px;
}
.create svg {
  width: 20px;
  height: 22px;
  margin: 11px 0 5px;
}
.default {
  width: 26px;
  height: 26px;
  background: linear-gradient(45deg, #a4b2bb 50%, #fff 50%);
}
.tabs {
  display: flex;
  align-items: flex-end;
  flex: none;
  height: 30px;
  font-size: 12px;
}
.tab {
  width: 46px;
  height: 20px;
  padding-right: 14px;
  border-top: 1px solid #fff;
  border-right: 2px solid #777;
  line-height: 18px;
}
.tab.on {
  width: 51px;
  height: 22px;
}
.dropper {
  margin: 0 5px 4px auto;
}
.dropper svg {
  width: 20px;
  height: 20px;
}
.browse {
  display: flex;
  align-items: center;
  flex: none;
  height: 36px;
  padding: 0 6px 2px 8px;
  border-bottom: 1px solid #999;
  font-size: 12px;
}
.nav-arrow {
  width: 16px;
  height: 18px;
  margin-right: 12px;
}
.nav-home {
  width: 20px;
  height: 20px;
  margin: 0 5px 0 -1px;
}
.nav-more {
  width: 18px;
  height: 18px;
  margin-left: 8px;
}
.browse .combo {
  flex: 1;
  min-width: 0;
  margin-top: 6px;
}
.browse select {
  height: 26px;
}
.lined select {
  background: linear-gradient(#000, #000) 3px 20px / 125px 1px no-repeat #fff;
}
.listing {
  display: flex;
  justify-content: space-between;
  overflow: hidden;
  background: #fff;
}
.colors {
  flex: 1;
  min-height: 0;
}
.folders {
  flex: none;
  height: 33px;
}
.grid {
  display: grid;
  grid-template-columns: repeat(3, 62px);
  grid-auto-rows: 62px;
  gap: 2px;
  padding: 2px 0 0 3px;
}
.swatch {
  padding: 1px;
  border: 1px solid #999;
  background-clip: content-box;
}
.folders svg {
  width: 36px;
  height: 32px;
  margin: 0 auto;
}
.scroll {
  display: flex;
  flex-direction: column;
  align-items: center;
  width: 20px;
  padding-top: 7px;
  background: #f1f1f1;
}
.scroll svg {
  flex: none;
  width: 12px;
  height: 8px;
}
.scroll i {
  flex: none;
  width: 19px;
  height: 21px;
  margin-top: 6px;
  background: #cdcdcd;
}
.scroll .down {
  margin: auto 0 6px;
  transform: rotate(180deg);
}
.outer {
  padding-top: 9px;
}
.second-head {
  flex: none;
  height: 31px;
  margin-top: 1px;
  padding: 8px 5px 0;
  border-top: 3px solid #777;
  border-bottom: 1px solid #999;
  background: linear-gradient(#f1f1f1 4px, #999 4px, #999 5px, #e4e3e4 5px);
  font-size: 12px;
  line-height: 18px;
}

/* status bar */
.status {
  display: flex;
  align-items: center;
  height: 28px;
  padding: 5px 6px 0;
  overflow: hidden;
  border-top: 1px solid #ddd;
  background: #f1f1f1;
  font-size: 16px;
}
.status svg {
  flex: none;
  width: 18px;
  height: 18px;
  margin-right: 17px;
}
.status svg:nth-of-type(3) {
  margin-right: 12px;
}
.status p {
  flex: 1;
  margin: 0;
  padding-left: 10px;
  border: 1px solid #888;
  border-width: 0 1px;
  font: 17px/14px "Noto Sans CJK KR", sans-serif;
  white-space: nowrap;
}
.status label {
  margin: 0 11px;
}
.status input {
  align-self: flex-start;
  width: 249px;
  height: 30px;
  flex: none;
  margin-top: -2px;
  padding: 0 3px;
  border: 1px solid #a9b8c8;
  font: inherit;
}
```
